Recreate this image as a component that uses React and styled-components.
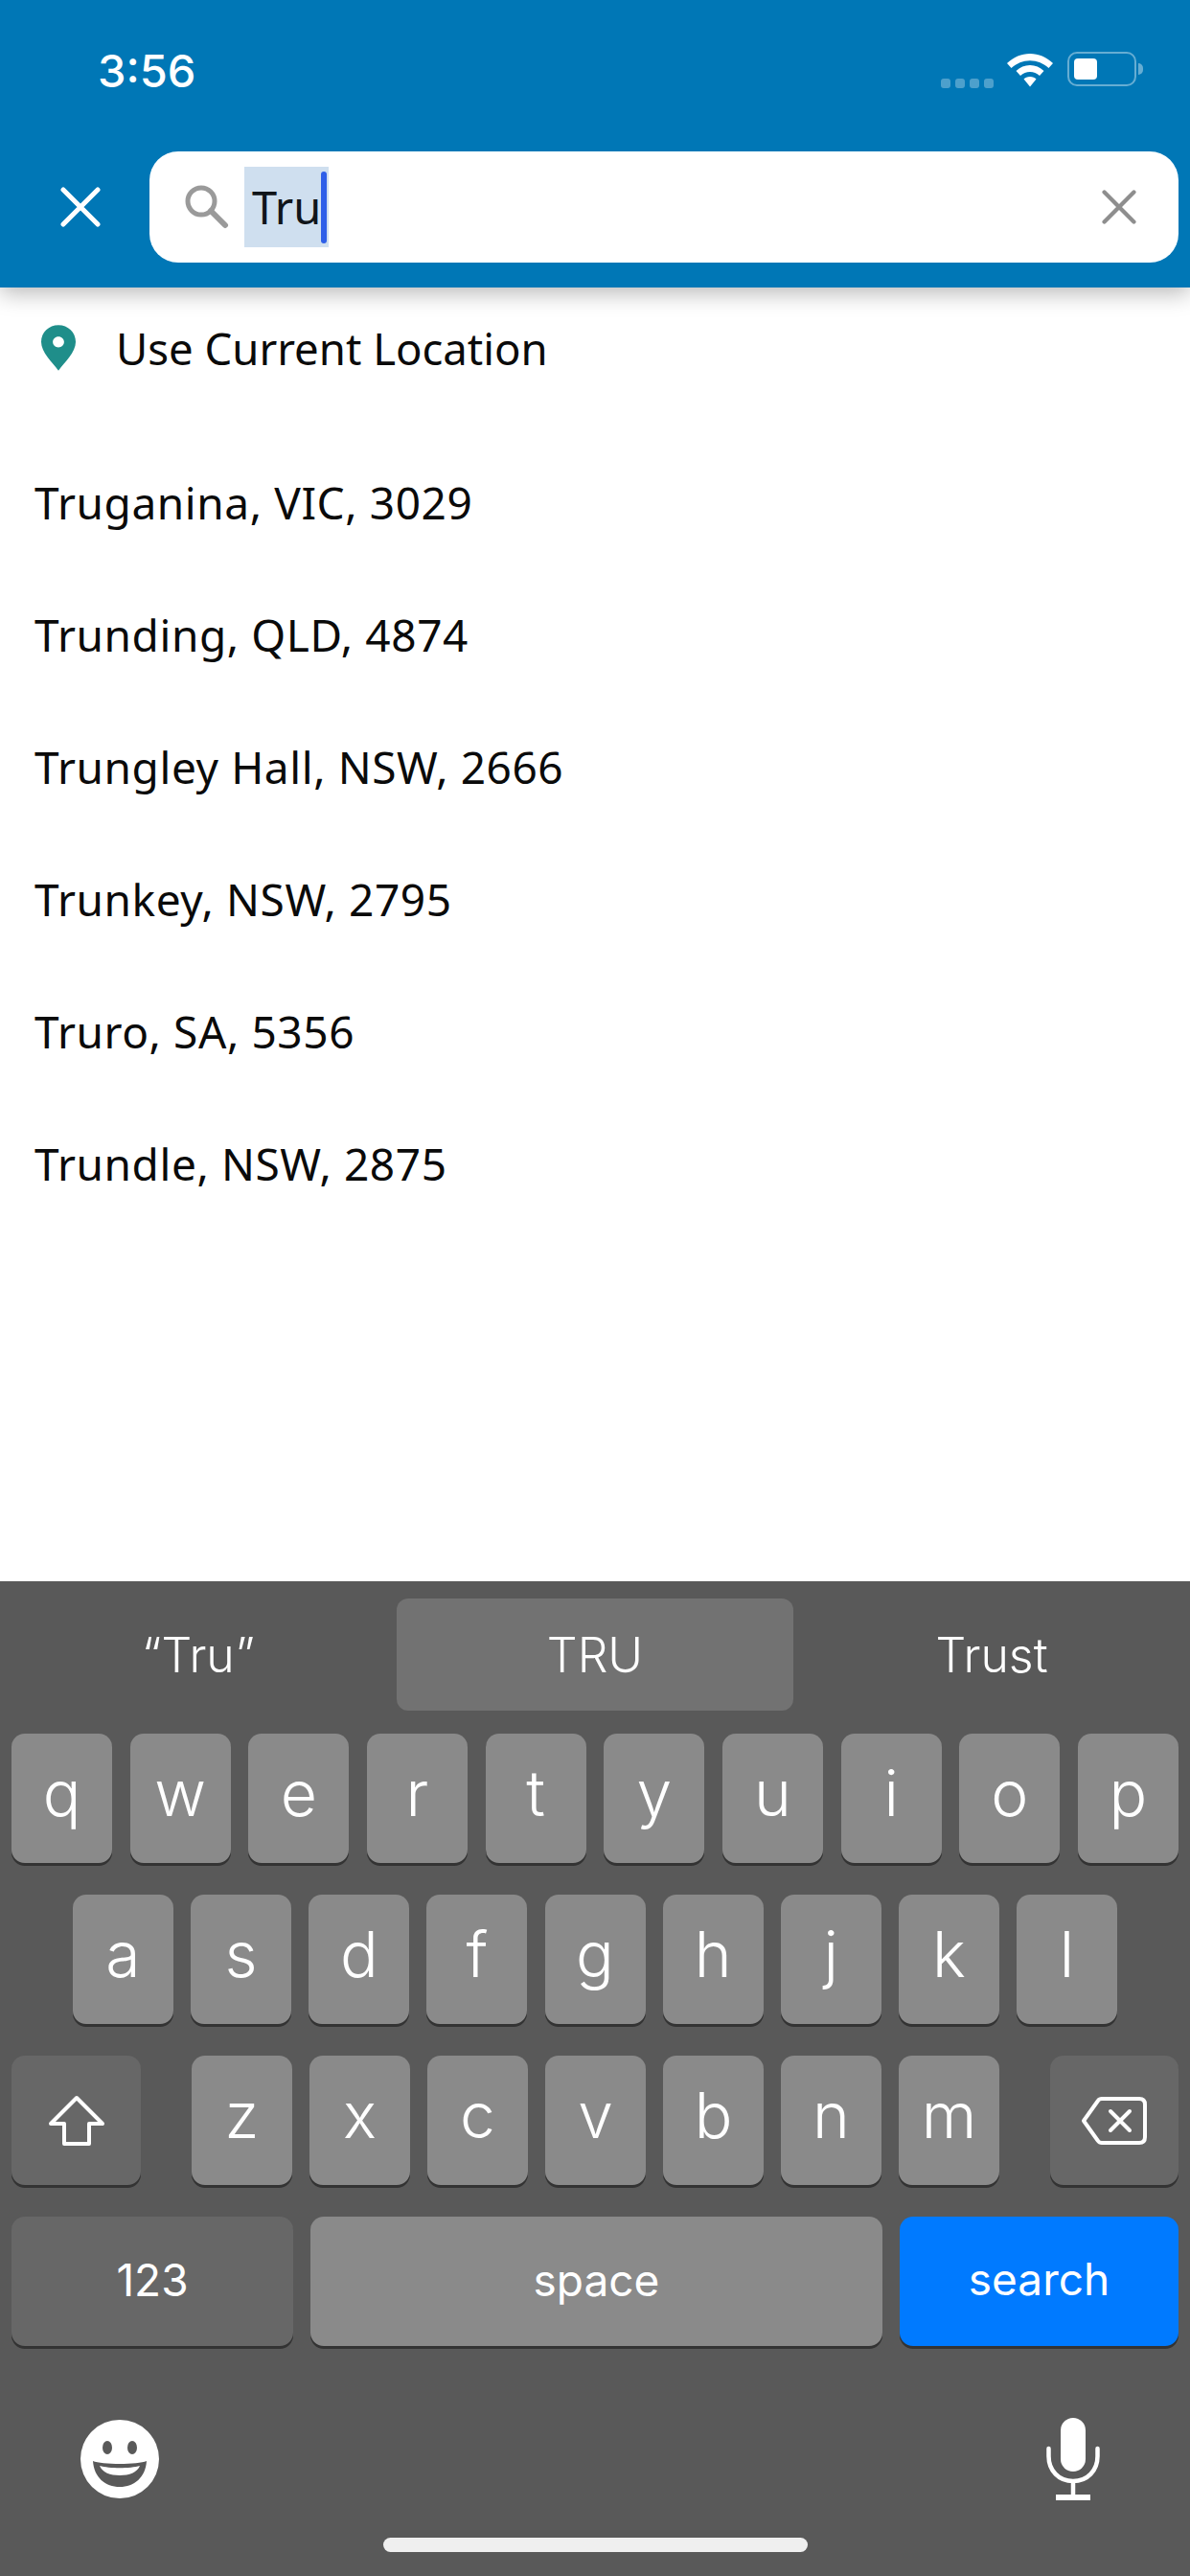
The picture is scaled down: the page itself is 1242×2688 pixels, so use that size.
import styled, { createGlobalStyle } from "styled-components";

const GlobalStyle = createGlobalStyle`
  html, body {
    margin: 0;
    padding: 0;
    background: #fff;
  }
  * {
    box-sizing: border-box;
  }
`;

const places = [
  "Truganina, VIC, 3029",
  "Trunding, QLD, 4874",
  "Trungley Hall, NSW, 2666",
  "Trunkey, NSW, 2795",
  "Truro, SA, 5356",
  "Trundle, NSW, 2875",
];

const App = () => {
  return (
    <Screen>
      <GlobalStyle />
      <Header>
        <StatusBar>
          <Time>3:56</Time>
          <StatusIcons>
            <Signal>
              {[0, 1, 2, 3].map((i) => (
                <SignalDot key={i} />
              ))}
            </Signal>
            <WifiIcon />
            <Battery>
              <BatteryFill />
            </Battery>
            <BatteryNub />
          </StatusIcons>
        </StatusBar>
        <SearchRow>
          <CloseButton>
            <CrossIcon size={42} color="#fff" stroke={5} />
          </CloseButton>
          <SearchBox>
            <SearchIcon />
            <Selection>
              Tru
              <Caret />
            </Selection>
            <ClearButton>
              <CrossIcon size={36} color="#8e8e8e" stroke={5} />
            </ClearButton>
          </SearchBox>
        </SearchRow>
      </Header>

      <Results>
        <CurrentLocation>
          <PinIcon />
          <span>Use Current Location</span>
        </CurrentLocation>
        {places.map((place) => (
          <Place key={place}>{place}</Place>
        ))}
      </Results>

      <Keyboard>
        <Suggestions>
          <Suggestion>“Tru”</Suggestion>
          <Suggestion $active>TRU</Suggestion>
          <Suggestion>Trust</Suggestion>
        </Suggestions>
        <KeyRow>
          {"qwertyuiop".split("").map((k) => (
            <Key key={k}>{k}</Key>
          ))}
        </KeyRow>
        <KeyRow $inset={76}>
          {"asdfghjkl".split("").map((k) => (
            <Key key={k}>{k}</Key>
          ))}
        </KeyRow>
        <KeyRow>
          <ActionKey $width={135}>
            <ShiftIcon />
          </ActionKey>
          <LetterGroup>
            {"zxcvbnm".split("").map((k) => (
              <Key key={k}>{k}</Key>
            ))}
          </LetterGroup>
          <ActionKey $width={134}>
            <BackspaceIcon />
          </ActionKey>
        </KeyRow>
        <KeyRow>
          <ActionKey $width={294}>
            <KeyLabel>123</KeyLabel>
          </ActionKey>
          <SpaceKey>
            <KeyLabel>space</KeyLabel>
          </SpaceKey>
          <SearchKey>
            <KeyLabel $lift>search</KeyLabel>
          </SearchKey>
        </KeyRow>
        <BottomIcons>
          <EmojiIcon />
          <MicIcon />
        </BottomIcons>
        <HomeIndicator />
      </Keyboard>
    </Screen>
  );
};

export default App;

const CrossIcon = ({ size, color, stroke }) => (
  <svg width={size} height={size} viewBox="0 0 42 42">
    <path
      d="M3 3 L39 39 M39 3 L3 39"
      stroke={color}
      strokeWidth={stroke}
      strokeLinecap="round"
      fill="none"
    />
  </svg>
);

const WifiIcon = () => (
  <svg width="48" height="35" viewBox="0 0 48 35">
    <path
      d="M24 0 C33 0 41 3.500 48 10 L43.500 15 C38 10 31.500 7.200 24 7.200 C16.500 7.200 10 10 4.500 15 L0 10 C7 3.500 15 0 24 0 Z"
      fill="#fff"
    />
    <path
      d="M24 12 C29.500 12 34.500 14 38.500 18 L34 23 C31 20.500 27.800 19 24 19 C20.200 19 17 20.500 14 23 L9.500 18 C13.500 14 18.500 12 24 12 Z"
      fill="#fff"
    />
    <path d="M24 24 C26.800 24 29 25 30.500 26.500 L24 34.500 L17.500 26.500 C19 25 21.200 24 24 24 Z" fill="#fff" />
  </svg>
);

const SearchIcon = () => (
  <svg width="46" height="46" viewBox="0 0 46 46">
    <circle cx="17" cy="17" r="14" stroke="#9a9a9a" strokeWidth="5" fill="none" />
    <path d="M27 27 L42 42" stroke="#9a9a9a" strokeWidth="6" strokeLinecap="round" />
  </svg>
);

const PinIcon = () => (
  <svg width="36" height="50" viewBox="0 0 38 50">
    <path
      fillRule="evenodd"
      d="M19 0 C29.500 0 38 8 38 18.500 C38 30 26 41 19 50 C12 41 0 30 0 18.500 C0 8 8.500 0 19 0 Z M19 12.500 C15.500 12.500 12.800 15.200 12.800 18.500 C12.800 21.800 15.500 24.500 19 24.500 C22.500 24.500 25.200 21.800 25.200 18.500 C25.200 15.200 22.500 12.500 19 12.500 Z"
      fill="#1f8e8a"
    />
  </svg>
);

const ShiftIcon = () => (
  <svg width="60" height="54" viewBox="0 0 60 54">
    <path
      d="M30 3 L57 30 L43 30 L43 51 L17 51 L17 30 L3 30 Z"
      stroke="#fff"
      strokeWidth="4"
      strokeLinejoin="round"
      fill="none"
    />
  </svg>
);

const BackspaceIcon = () => (
  <svg width="70" height="52" viewBox="0 0 70 52">
    <path
      d="M22 3 L61 3 C65 3 67 5 67 9 L67 43 C67 47 65 49 61 49 L22 49 C20 49 19 48.500 18 47 L3 26 L18 5 C19 3.500 20 3 22 3 Z"
      stroke="#fff"
      strokeWidth="4"
      strokeLinejoin="round"
      fill="none"
    />
    <path d="M31 16 L51 36 M51 16 L31 36" stroke="#fff" strokeWidth="4" strokeLinecap="round" />
  </svg>
);

const EmojiIcon = () => (
  <svg width="82" height="82" viewBox="0 0 82 82">
    <circle cx="41" cy="41" r="41" fill="#fff" />
    <ellipse cx="28" cy="29" rx="5" ry="7" fill="#595959" />
    <ellipse cx="54" cy="29" rx="5" ry="7" fill="#595959" />
    <path d="M13 43 C22 47 60 47 69 43 C68 60 56 70 41 70 C26 70 14 60 13 43 Z" fill="#595959" />
    <path d="M20 48 C30 51 52 51 62 48 C59 55 51 58 41 58 C31 58 23 55 20 48 Z" fill="#fff" />
  </svg>
);

const MicIcon = () => (
  <svg width="56" height="86" viewBox="0 0 56 86">
    <rect x="15" y="0" width="26" height="56" rx="13" fill="#fff" />
    <path d="M2.500 32 L2.500 40 C2.500 55 13 66 28 66 C43 66 53.500 55 53.500 40 L53.500 32" stroke="#fff" strokeWidth="4.500" fill="none" strokeLinecap="round" />
    <path d="M28 66 L28 82" stroke="#fff" strokeWidth="4.500" />
    <rect x="10" y="80" width="36" height="6" fill="#fff" />
  </svg>
);

const Screen = styled.div`
  width: 1242px;
  height: 2688px;
  display: flex;
  flex-direction: column;
  overflow: hidden;
  background: #fff;
`;

const Header = styled.header`
  position: relative;
  z-index: 1;
  height: 300px;
  flex-shrink: 0;
  background: #0077b6;
  box-shadow: 0 6px 22px rgba(0, 0, 0, 0.28);
`;

const StatusBar = styled.div`
  height: 158px;
  display: flex;
  justify-content: space-between;
  padding: 48px 49px 0 102px;
`;

const Time = styled.div`
  color: #fff;
  font-family: Inter, "Liberation Sans", sans-serif;
  font-size: 47px;
  font-weight: 500;
  line-height: 52px;
`;

const StatusIcons = styled.div`
  display: flex;
  align-items: flex-start;
  height: 40px;
  padding-top: 8px;
`;

const Signal = styled.div`
  display: flex;
  gap: 5px;
  margin: 26px 14px 0 0;
`;

const SignalDot = styled.span`
  width: 10px;
  height: 10px;
  border-radius: 3px;
  background: rgba(255, 255, 255, 0.3);
`;

const Battery = styled.div`
  width: 72px;
  height: 36px;
  margin: -2px 0 0 15px;
  padding: 5px;
  border: 2px solid rgba(255, 255, 255, 0.4);
  border-radius: 10px;
`;

const BatteryFill = styled.div`
  width: 24px;
  height: 100%;
  background: #fff;
  border-radius: 4px;
`;

const BatteryNub = styled.div`
  width: 5px;
  height: 12px;
  margin: 10px 0 0 2px;
  background: rgba(255, 255, 255, 0.4);
  border-radius: 0 6px 6px 0;
`;

const SearchRow = styled.div`
  display: flex;
  align-items: center;
  padding: 0 12px 0 63px;
`;

const CloseButton = styled.div`
  display: flex;
  width: 93px;
  flex-shrink: 0;
`;

const SearchBox = styled.div`
  flex: 1;
  height: 116px;
  display: flex;
  align-items: center;
  padding: 0 44px 0 37px;
  background: #fff;
  border-radius: 30px;
`;

const Selection = styled.div`
  display: flex;
  align-items: center;
  height: 84px;
  margin-left: 16px;
  padding: 0 2px 0 8px;
  background: #cfdfef;
  color: #10151a;
  font-family: "Noto Sans", "Open Sans", sans-serif;
  font-size: 47px;
`;

const Caret = styled.span`
  width: 6px;
  height: 75px;
  border-radius: 3px;
  background: #2f5fe8;
`;

const ClearButton = styled.div`
  display: flex;
  margin-left: auto;
`;

const Results = styled.main`
  flex: 1;
  display: flex;
  flex-direction: column;
  color: #0a0a0a;
  font-family: "Noto Sans", "Open Sans", sans-serif;
  font-size: 46px;
`;

const CurrentLocation = styled.div`
  display: flex;
  align-items: center;
  gap: 42px;
  height: 126px;
  margin-bottom: 29px;
  padding-left: 43px;
  font-size: 45.500px;
`;

const Place = styled.div`
  display: flex;
  align-items: center;
  height: 138px;
  padding-left: 36px;
  letter-spacing: 0.6px;
`;

const Keyboard = styled.section`
  height: 1038px;
  flex-shrink: 0;
  padding: 18px 12px 0;
  background: #595959;
  color: #fff;
  font-family: Inter, "Liberation Sans", sans-serif;
  font-weight: 300;
`;

const Suggestions = styled.div`
  display: grid;
  grid-template-columns: repeat(3, 414px);
  height: 117px;
  margin: 0 -12px 24px;
`;

const Suggestion = styled.div`
  display: flex;
  align-items: center;
  justify-content: center;
  border-radius: 12px;
  background: ${({ $active }) => ($active ? "#727272" : "transparent")};
  font-size: 50px;
`;

const KeyRow = styled.div`
  display: flex;
  justify-content: space-between;
  height: 135px;
  margin-bottom: 33px;
  padding-left: ${({ $inset }) => ($inset ? `${$inset - 12}px` : "0")};
  padding-right: ${({ $inset }) => ($inset ? `${$inset - 12}px` : "0")};
`;

const LetterGroup = styled.div`
  display: flex;
  gap: 18px;
  width: 843px;
`;

const KeyBase = styled.div`
  display: flex;
  align-items: center;
  justify-content: center;
  height: 135px;
  border-radius: 14px;
  box-shadow: 0 3px 0 #333;
`;

const Key = styled(KeyBase)`
  flex: 0 0 105px;
  padding-bottom: 12px;
  background: #8a8a8a;
  font-size: 66px;
`;

const ActionKey = styled(KeyBase)`
  flex: 0 0 ${({ $width }) => $width}px;
  background: #676767;
`;

const SpaceKey = styled(KeyBase)`
  flex: 0 0 597px;
  background: #8a8a8a;
`;

const SearchKey = styled(KeyBase)`
  flex: 0 0 291px;
  background: #007aff;
`;

const KeyLabel = styled.span`
  font-size: 46px;
  font-weight: 400;
  margin-bottom: ${({ $lift }) => ($lift ? "6px" : "3px")};
`;

const BottomIcons = styled.div`
  display: flex;
  justify-content: space-between;
  align-items: center;
  margin-top: 75px;
  padding: 0 82px 0 72px;
`;

const HomeIndicator = styled.div`
  width: 443px;
  height: 15px;
  margin: 39px auto 0;
  border-radius: 8px;
  background: #efefef;
`;
